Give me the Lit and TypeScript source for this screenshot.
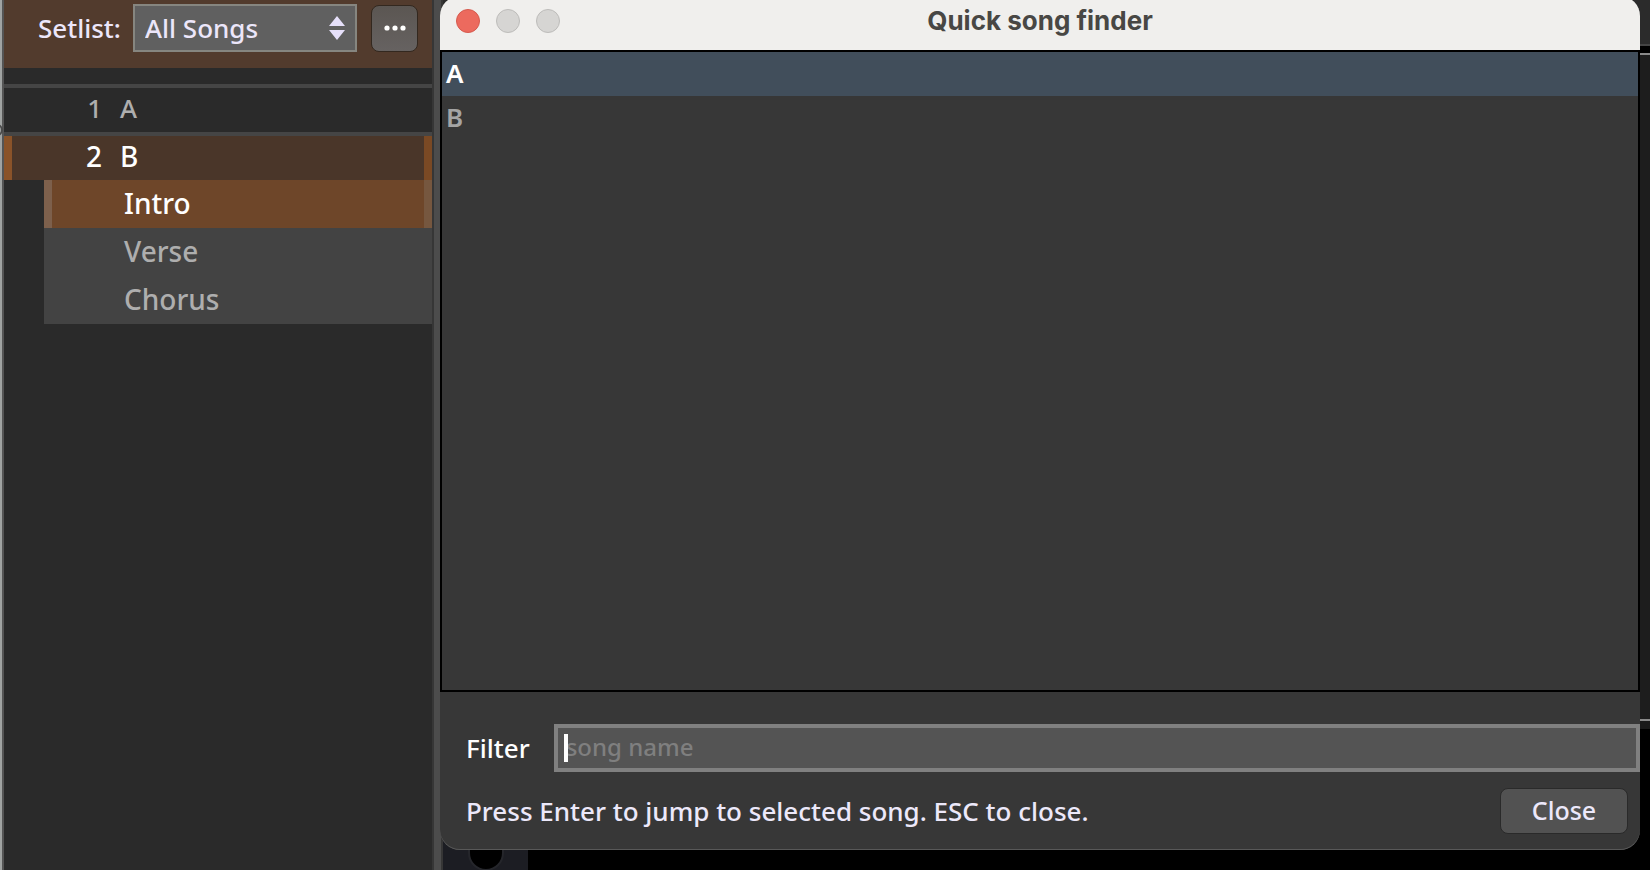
import { LitElement, html, css } from "lit";
import { customElement, state } from "lit/decorators.js";

const SONGS = ["A", "B"];
const PARTS = ["Intro", "Verse", "Chorus"];

@customElement("setlist-panel")
class SetlistPanel extends LitElement {
  @state() private part = 0;

  static styles = css`
    :host {
      display: flex;
      flex-direction: column;
      box-sizing: border-box;
      background: #2a2a2a;
      color: #aeaeae;
      font-size: 28px;
      line-height: 40px;
    }
    * { box-sizing: border-box; }
    .head {
      display: flex;
      align-items: center;
      height: 68px;
      padding: 0 14px 12px 34px;
      background: #523b2d;
      color: #ece6fa;
      font-size: 26px;
    }
    .head label { flex: 1; white-space: nowrap; }
    .pick { display: grid; flex: none; width: 224px; align-items: center; }
    .pick select {
      grid-area: 1 / 1;
      appearance: none;
      width: 100%;
      height: 48px;
      padding: 0 10px;
      border: 2px solid #868680;
      border-radius: 0;
      background: #606060;
      color: inherit;
      font: inherit;
    }
    .pick svg {
      grid-area: 1 / 1;
      justify-self: end;
      margin-right: 12px;
      pointer-events: none;
    }
    .more {
      display: grid;
      place-items: center;
      flex: none;
      width: 47px;
      height: 47px;
      margin-left: 14px;
      padding: 0;
      border: 1px solid #33281f;
      border-radius: 8px;
      background: linear-gradient(#5b5652, #666261);
    }
    ul { list-style: none; margin: 0; padding: 0; }
    .songs { margin-top: 16px; }
    .song {
      display: grid;
      grid-template-columns: 98px 1fr;
      column-gap: 18px;
      height: 48px;
      border-top: 4px solid #454545;
      font-size: 26px;
    }
    .num { text-align: right; }
    .song.on {
      background: #4a3629;
      box-shadow: inset 8px 0 #8a5329, inset -8px 0 #7a4924;
      color: #fff;
      font-size: 28px;
    }
    .parts { margin-left: 40px; background: #434343; }
    .part { height: 48px; padding-left: 80px; line-height: 46px; }
    .part.on {
      background: #6e4629;
      box-shadow: inset 8px 0 #7d604c, inset -8px 0 #76573f;
      color: #fff;
    }
  `;

  render() {
    return html`
      <div class="head">
        <label for="setlist">Setlist:</label>
        <div class="pick">
          <select id="setlist"><option>All Songs</option></select>
          <svg width="16" height="24" viewBox="0 0 16 24" fill="#e6e0fa" aria-hidden="true">
            <path d="M8 0 16 10H0ZM0 14H16L8 24Z" />
          </svg>
        </div>
        <button class="more" aria-label="Setlist options">
          <svg width="22" height="6" viewBox="0 0 22 6" fill="#fff" aria-hidden="true">
            <circle cx="3" cy="3" r="2.6" /><circle cx="11" cy="3" r="2.6" /><circle cx="19" cy="3" r="2.6" />
          </svg>
        </button>
      </div>
      <ul class="songs">
        ${SONGS.map(
          (s, i) => html`<li class="song ${i === 1 ? "on" : ""}">
            <span class="num">${i + 1}</span><span>${s}</span>
          </li>`
        )}
      </ul>
      <ul class="parts">
        ${PARTS.map(
          (p, i) => html`<li class="part ${i === this.part ? "on" : ""}" @click=${() => (this.part = i)}>${p}</li>`
        )}
      </ul>
    `;
  }
}

@customElement("song-finder")
class SongFinder extends LitElement {
  @state() private query = "";

  static styles = css`
    :host {
      display: flex;
      flex-direction: column;
      overflow: hidden;
      border-radius: 20px;
      background: #373737;
      color: #ece8fa;
      font-size: 26px;
      box-shadow: inset 0 -1px #585858;
    }
    * { box-sizing: border-box; }
    .bar {
      display: grid;
      grid-template-columns: 1fr auto 1fr;
      align-items: center;
      height: 54px;
      padding: 0 16px 4px;
      background: #f0efed;
    }
    .lights { display: flex; gap: 16px; }
    .light {
      width: 24px;
      height: 24px;
      padding: 0;
      border: 1px solid #bdbcba;
      border-radius: 50%;
      background: #d6d5d3;
    }
    .light.close { border-color: #d55a4e; background: #ec6a5e; }
    h1 {
      margin: 0;
      color: #484744;
      font: 700 26px/32px Inter, sans-serif;
    }
    .list {
      flex: 1;
      list-style: none;
      margin: 0;
      padding: 0;
      border: 2px solid #000;
      color: #a4a4a4;
    }
    .list li { height: 44px; padding-left: 4px; line-height: 42px; font-weight: 600; }
    .list li.on { background: #414e5b; color: #fff; }
    .filter {
      display: flex;
      align-items: center;
      gap: 24px;
      padding: 32px 0 16px 26px;
      color: #fff;
    }
    .filter input {
      min-width: 0;
      height: 48px;
      padding: 0 8px 4px;
      border: 4px solid #808080;
      border-radius: 0;
      outline: 0;
      background: #545454;
      color: #fff;
      font: inherit;
      font-size: 24px;
    }
    .filter input::placeholder { color: #7f7f7f; opacity: 1; }
    .field { display: grid; flex: 1; align-items: center; }
    .field input, .caret { grid-area: 1 / 1; }
    .caret { width: 4px; height: 28px; margin-left: 10px; background: #fff; pointer-events: none; }
    .foot {
      display: flex;
      align-items: center;
      justify-content: space-between;
      padding: 0 12px 16px 26px;
    }
    .foot p { margin: 0; }
    .foot button {
      width: 128px;
      height: 46px;
      padding: 0 0 2px;
      border: 1px solid #2a2a2a;
      border-radius: 8px;
      background: #525252;
      color: inherit;
      font: inherit;
      font-size: 25px;
    }
  `;

  private onInput(e: Event) {
    this.query = (e.target as HTMLInputElement).value;
  }

  render() {
    const hits = SONGS.filter((s) => s.toLowerCase().includes(this.query.toLowerCase()));
    return html`
      <header class="bar">
        <div class="lights">
          <button class="light close" aria-label="Close window"></button>
          <button class="light" aria-label="Minimize" disabled></button>
          <button class="light" aria-label="Zoom" disabled></button>
        </div>
        <h1>Quick song finder</h1>
      </header>
      <ul class="list">
        ${hits.map((s, i) => html`<li class=${i === 0 ? "on" : ""}>${s}</li>`)}
      </ul>
      <div class="filter">
        <label for="q">Filter</label>
        <div class="field">
          <input id="q" placeholder="song name" @input=${this.onInput} />
          ${this.query ? "" : html`<span class="caret"></span>`}
        </div>
      </div>
      <div class="foot">
        <p>Press Enter to jump to selected song. ESC to close.</p>
        <button>Close</button>
      </div>
    `;
  }
}

@customElement("app-root")
class AppRoot extends LitElement {
  static styles = css`
    :host {
      display: flex;
      height: 100vh;
      overflow: hidden;
      background: #000;
      font-family: "Noto Sans", "Open Sans", sans-serif;
      font-weight: 500;
    }
    .edge { flex: none; width: 4px; box-sizing: border-box; background: #a0a3a2; border-right: 2px solid #555; }
    .edge svg { display: block; margin-top: 122px; }
    setlist-panel { flex: none; width: 428px; }
    .split { flex: none; width: 11px; box-sizing: border-box; background: #4c4c4c; border: solid #363636; border-width: 0 2px; }
    .work { position: relative; flex: 1; display: flex; flex-direction: column; }
    .strip { height: 44px; background: #2b2b2b; border-bottom: 2px solid #444; }
    .canvas { flex: 1; margin-top: 7px; background: #1d1d1d; border: solid #8a8a8a; border-width: 2px 0; }
    .rail { height: 8px; background: #1a1a1a; }
    .keys { height: 141px; }
    .keys svg { display: block; margin-top: 101px; }
    song-finder { position: absolute; top: -4px; right: 10px; bottom: 20px; left: -3px; }
  `;

  render() {
    return html`
      <div class="edge">
        <svg width="4" height="16" viewBox="0 0 4 16" fill="none" stroke="#4a4a4a" stroke-width="2" aria-hidden="true">
          <circle cx="-3" cy="8" r="5" />
        </svg>
      </div>
      <setlist-panel></setlist-panel>
      <div class="split"></div>
      <main class="work">
        <div class="strip"></div>
        <div class="canvas"></div>
        <div class="rail"></div>
        <div class="keys">
          <svg width="85" height="40" viewBox="0 0 85 40" aria-hidden="true">
            <rect width="85" height="40" fill="#1c1d23" />
            <rect x="26" y="-12" width="34" height="52" rx="17" fill="#000" stroke="#25262b" stroke-width="2" />
          </svg>
        </div>
        <song-finder></song-finder>
      </main>
    `;
  }
}
